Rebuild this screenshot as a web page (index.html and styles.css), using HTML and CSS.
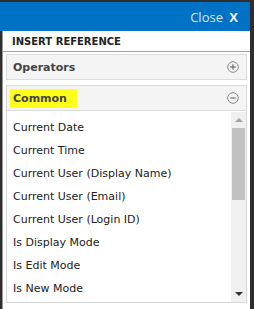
FILE: index.html
```html
<!DOCTYPE html>
<html lang="en">
<head>
  <meta charset="UTF-8">
  <title>Insert Reference</title>
  <link rel="stylesheet" href="styles.css">
</head>
<body>
  <div class="panel">
    <div class="topbar">
      <span class="close">Close <b>X</b></span>
    </div>

    <div class="content">
      <div class="title">INSERT REFERENCE</div>

      <div class="group">
        <span class="group-name">Operators</span>
        <svg class="toggle" width="12" height="12" viewBox="0 0 12 12">
          <circle cx="6" cy="6" r="5.3" fill="none" stroke="#8a8a8a" stroke-width="1"/>
          <path d="M3.3 6h5.4M6 3.3v5.4" stroke="#7a7a7a" stroke-width="1.3"/>
        </svg>
      </div>

      <div class="group open">
        <span class="group-name highlight">Common</span>
        <svg class="toggle" width="12" height="12" viewBox="0 0 12 12">
          <circle cx="6" cy="6" r="5.3" fill="none" stroke="#8a8a8a" stroke-width="1"/>
          <path d="M3.3 6h5.4" stroke="#7a7a7a" stroke-width="1.3"/>
        </svg>
      </div>

      <div class="list">
        <ul class="items">
          <li>Current Date</li>
          <li>Current Time</li>
          <li>Current User (Display Name)</li>
          <li>Current User (Email)</li>
          <li>Current User (Login ID)</li>
          <li>Is Display Mode</li>
          <li>Is Edit Mode</li>
          <li>Is New Mode</li>
        </ul>
        <div class="scrollbar">
          <span class="arrow up"></span>
          <span class="thumb"></span>
          <span class="arrow down"></span>
        </div>
      </div>
    </div>
  </div>
</body>
</html>
```

FILE: styles.css
```css
body {
  margin: 0;
  background-color: #2e2e2e;
  font-family: "DejaVu Sans", Verdana, sans-serif;
}

.panel {
  width: 250px;
  height: 309px;
  padding-top: 2px;
  box-sizing: border-box;
  display: flex;
  flex-direction: column;
}

.topbar {
  height: 29px;
  background-color: #0072c6;
  display: flex;
  justify-content: flex-end;
  align-items: center;
  padding-right: 12px;
}

.close {
  font-family: "Open Sans", "Liberation Sans", sans-serif;
  font-size: 13px;
  color: #d6e8f7;
}

.close b {
  margin-left: 3px;
  color: #fff;
  font-family: "Liberation Sans", sans-serif;
  font-size: 13px;
}

.content {
  flex: 1;
  background-color: #fff;
  margin-left: 2px;
  border-left: 1px solid #9a9a9a;
  padding: 0 3px 6px 3px;
  display: flex;
  flex-direction: column;
  overflow: hidden;
}

.title {
  font-size: 10px;
  font-weight: bold;
  color: #222;
  padding: 5px 0 4px 9px;
  margin: 0 -3px 2px -3px;
  border-bottom: 1px solid #a5a5a5;
}

.group {
  height: 24px;
  display: flex;
  align-items: center;
  justify-content: space-between;
  padding: 0 7px 0 6px;
  background-color: #f4f4f4;
  border: 1px solid #dcdcdc;
  margin-bottom: 5px;
}

.group.open {
  margin-bottom: 0;
}

.group-name {
  font-size: 11px;
  font-weight: bold;
  color: #444;
}

.highlight {
  background-color: #ffff1a;
  padding: 3px 10px 3px 3px;
  margin-left: -3px;
}

.list {
  flex: 1;
  display: flex;
  border: 1px solid #d8d8d8;
  border-top: none;
  overflow: hidden;
}

.items {
  flex: 1;
  list-style: none;
  margin: 0;
  padding: 5px 0 0 6px;
  overflow: hidden;
}

.items li {
  height: 23px;
  line-height: 23px;
  font-size: 11px;
  color: #222;
  white-space: nowrap;
}

.scrollbar {
  width: 15px;
  background-color: #f0f0f0;
  display: flex;
  flex-direction: column;
  align-items: center;
  margin-top: 1px;
}

.arrow {
  width: 0;
  height: 0;
  border-left: 4px solid transparent;
  border-right: 4px solid transparent;
}

.arrow.up {
  margin-top: 6px;
  border-bottom: 4px solid #a3a3a3;
}

.arrow.down {
  margin-top: auto;
  margin-bottom: 6px;
  border-top: 4px solid #333;
}

.thumb {
  width: 13px;
  height: 72px;
  margin-top: 6px;
  background-color: #c1c1c1;
}
```
